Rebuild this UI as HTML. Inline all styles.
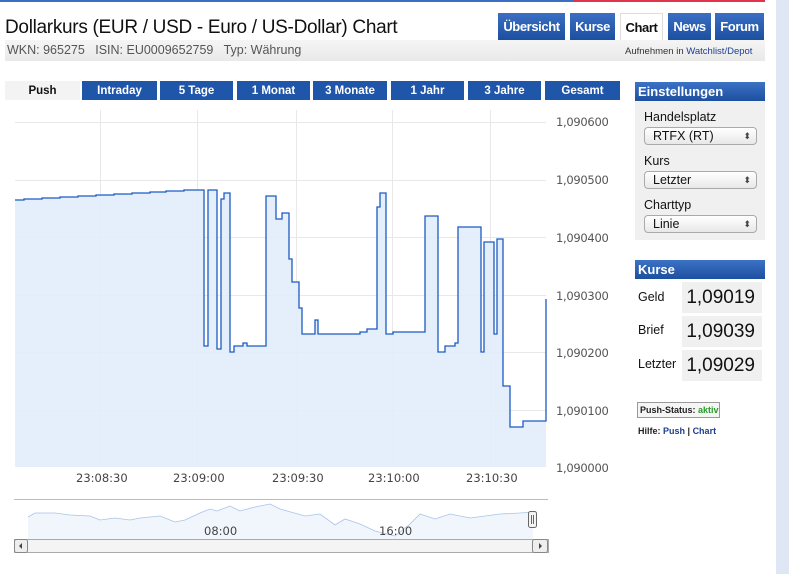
<!DOCTYPE html>
<html><head><meta charset="utf-8"><style>
*{margin:0;padding:0;box-sizing:border-box}
body{width:789px;height:574px;background:#fff;font-family:"Liberation Sans",Arial,sans-serif;position:relative;overflow:hidden}
.a{position:absolute}
.tab{position:absolute;top:13px;height:27px;background:linear-gradient(#3a6fc4,#1d4f9f);color:#fff;font-weight:bold;font-size:13px;text-align:center;line-height:28px;letter-spacing:-0.4px}
.per{position:absolute;top:81px;height:19px;background:#1f56a9;color:#fff;font-weight:bold;font-size:11.5px;text-align:center;line-height:21px}
.hd{position:absolute;left:635px;width:130px;height:19px;background:linear-gradient(#3c72c6,#1d4f9f);color:#fff;font-weight:bold;font-size:13px;line-height:20px;padding-left:3px}
.lbl{position:absolute;left:644px;font-size:12.5px;color:#111}
.sel{position:absolute;left:644px;width:113px;height:18px;border:1px solid #aaa;border-radius:4px;background:linear-gradient(#fff,#e8e8e8);font-size:12.5px;line-height:16px;padding-left:8px;color:#111}
.sel:after{content:"⬍";position:absolute;right:5px;top:0;font-size:9px;color:#444}
.y{position:absolute;left:556px;font-size:11.5px;color:#555;font-family:"DejaVu Sans",sans-serif;letter-spacing:-0.3px}
.t{position:absolute;top:471px;font-size:11.5px;color:#444;font-family:"DejaVu Sans",sans-serif}
.kl{position:absolute;left:638px;font-size:12.5px;color:#111}
.kv{position:absolute;left:682px;width:80px;height:31px;background:#f0f0f0;font-size:19px;text-align:right;padding-right:7px;line-height:31px;color:#111}
</style></head><body>
<div class="a" style="left:0;top:0;width:573px;height:2px;background:#3a6fc4"></div>
<div class="a" style="left:573px;top:0;width:192px;height:2px;background:#e0334c"></div>
<div class="a" style="left:776px;top:0;width:13px;height:574px;background:#dfe7f5"></div>
<div class="a" style="left:5px;top:17px;font-size:19px;color:#111;letter-spacing:-0.3px">Dollarkurs (EUR / USD - Euro / US-Dollar) Chart</div>
<div class="tab" style="left:498px;width:67px">Übersicht</div>
<div class="tab" style="left:570px;width:45px">Kurse</div>
<div class="tab" style="left:620px;width:43px;background:#fff;color:#111;border:1px solid #ddd;border-bottom:none">Chart</div>
<div class="tab" style="left:668px;width:43px">News</div>
<div class="tab" style="left:715px;width:49px">Forum</div>
<div class="a" style="left:5px;top:40px;width:760px;height:21px;background:linear-gradient(#f5f5f5,#e9e9e9)"></div>
<div class="a" style="left:7px;top:43px;font-size:12.5px;color:#555">WKN: 965275 &nbsp; ISIN: EU0009652759 &nbsp; Typ: Währung</div>
<div class="a" style="left:625px;top:46px;font-size:9.5px;color:#333">Aufnehmen in <span style="color:#1d3f8f">Watchlist/Depot</span></div>
<div class="per" style="left:5px;width:75px;background:#f3f3f3;color:#111">Push</div>
<div class="per" style="left:82px;width:75px">Intraday</div>
<div class="per" style="left:160px;width:73px">5 Tage</div>
<div class="per" style="left:237px;width:73px">1 Monat</div>
<div class="per" style="left:313px;width:74px">3 Monate</div>
<div class="per" style="left:391px;width:73px">1 Jahr</div>
<div class="per" style="left:468px;width:73px">3 Jahre</div>
<div class="per" style="left:545px;width:75px">Gesamt</div>

<svg class="a" style="left:0;top:0" width="560" height="574">
<g stroke="#e8e8e8" stroke-width="1">
<line x1="15" y1="122.5" x2="546" y2="122.5"/><line x1="15" y1="180.5" x2="546" y2="180.5"/><line x1="15" y1="237.5" x2="546" y2="237.5"/><line x1="15" y1="295.5" x2="546" y2="295.5"/><line x1="15" y1="352.5" x2="546" y2="352.5"/><line x1="15" y1="410.5" x2="546" y2="410.5"/>
<line x1="100.5" y1="110" x2="100.5" y2="467"/><line x1="197.5" y1="110" x2="197.5" y2="467"/><line x1="296.5" y1="110" x2="296.5" y2="467"/><line x1="392.5" y1="110" x2="392.5" y2="467"/><line x1="490.5" y1="110" x2="490.5" y2="467"/>
</g>
<defs><path id="ln" d="M15 200 L24 200 L24 199 L42 199 L42 198 L60 198 L60 197 L78 197 L78 196 L96 196 L96 195 L114 195 L114 194 L132 194 L132 193 L150 193 L150 192 L166 192 L166 191 L184 191 L184 190 L204 190 L204 346 L208 346 L208 190 L217 190 L217 349 L221 349 L221 199 L224 199 L224 193 L230 193 L230 352 L234 352 L234 346 L243 346 L243 343 L247 343 L247 346 L266 346 L266 196 L276 196 L276 219 L282 219 L282 213 L289 213 L289 259 L292 259 L292 282 L299 282 L299 308 L302 308 L302 334 L315 334 L315 320 L318 320 L318 334 L360 334 L360 332 L367 332 L367 329 L377 329 L377 207 L380 207 L380 193 L386 193 L386 334 L393 334 L393 332 L425 332 L425 216 L438 216 L438 352 L445 352 L445 346 L455 346 L455 343 L458 343 L458 227 L481 227 L481 352 L484 352 L484 242 L494 242 L494 334 L497 334 L497 239 L503 239 L503 386 L510 386 L510 427 L523 427 L523 421 L546 421 L546 299"/></defs>
<path fill="#e1edfb" fill-opacity="0.9" d="M15 200 L24 200 L24 199 L42 199 L42 198 L60 198 L60 197 L78 197 L78 196 L96 196 L96 195 L114 195 L114 194 L132 194 L132 193 L150 193 L150 192 L166 192 L166 191 L184 191 L184 190 L204 190 L204 346 L208 346 L208 190 L217 190 L217 349 L221 349 L221 199 L224 199 L224 193 L230 193 L230 352 L234 352 L234 346 L243 346 L243 343 L247 343 L247 346 L266 346 L266 196 L276 196 L276 219 L282 219 L282 213 L289 213 L289 259 L292 259 L292 282 L299 282 L299 308 L302 308 L302 334 L315 334 L315 320 L318 320 L318 334 L360 334 L360 332 L367 332 L367 329 L377 329 L377 207 L380 207 L380 193 L386 193 L386 334 L393 334 L393 332 L425 332 L425 216 L438 216 L438 352 L445 352 L445 346 L455 346 L455 343 L458 343 L458 227 L481 227 L481 352 L484 352 L484 242 L494 242 L494 334 L497 334 L497 239 L503 239 L503 386 L510 386 L510 427 L523 427 L523 421 L546 421 L546 299 L546 467 L15 467 Z"/>
<use href="#ln" fill="none" stroke="#1c5bc4" stroke-width="1.3"/>
<line x1="14" y1="499.5" x2="548" y2="499.5" stroke="#bbb"/>
<path d="M28 517 L35 513 L55 513 L70 515 L90 516 L100 520 L115 518 L130 520 L140 518 L160 516 L175 522 L185 520 L200 513 L210 509 L217 511 L230 506 L240 511 L255 507 L270 504 L280 509 L305 516 L320 514 L335 525 L345 519 L360 524 L375 531 L395 536 L410 524 L420 514 L435 519 L450 514 L470 518 L500 514 L520 513 L533 512 L533 539 L28 539Z" fill="#f1f6fd"/>
<path d="M28 517 L35 513 L55 513 L70 515 L90 516 L100 520 L115 518 L130 520 L140 518 L160 516 L175 522 L185 520 L200 513 L210 509 L217 511 L230 506 L240 511 L255 507 L270 504 L280 509 L305 516 L320 514 L335 525 L345 519 L360 524 L375 531 L395 536 L410 524 L420 514 L435 519 L450 514 L470 518 L500 514 L520 513 L533 512" fill="none" stroke="#a9c3e8" stroke-width="0.8"/>
<rect x="14.5" y="539.5" width="534" height="13" fill="#f4f4f4" stroke="#aaa"/>
<rect x="14.5" y="539.5" width="13" height="13" rx="2" fill="#eee" stroke="#888"/>
<rect x="532.5" y="539.5" width="15" height="13" rx="2" fill="#eee" stroke="#888"/>
<path d="M22 543 L19 546 L22 549Z" fill="#444"/><path d="M539 543 L542 546 L539 549Z" fill="#444"/>
<rect x="528.5" y="511.5" width="8" height="16" rx="2" fill="#f4f4f4" stroke="#666"/>
<line x1="531.5" y1="515" x2="531.5" y2="524" stroke="#666"/><line x1="533.5" y1="515" x2="533.5" y2="524" stroke="#666"/>
</svg>
<div class="y" style="top:115px">1,090600</div>
<div class="y" style="top:173px">1,090500</div>
<div class="y" style="top:231px">1,090400</div>
<div class="y" style="top:289px">1,090300</div>
<div class="y" style="top:346px">1,090200</div>
<div class="y" style="top:404px">1,090100</div>
<div class="y" style="top:461px">1,090000</div>
<div class="t" style="left:76px">23:08:30</div>
<div class="t" style="left:173px">23:09:00</div>
<div class="t" style="left:272px">23:09:30</div>
<div class="t" style="left:368px">23:10:00</div>
<div class="t" style="left:466px">23:10:30</div>
<div class="a" style="left:204px;top:524px;font-size:11.5px;color:#444;font-family:'DejaVu Sans',sans-serif">08:00</div>
<div class="a" style="left:379px;top:524px;font-size:11.5px;color:#444;font-family:'DejaVu Sans',sans-serif">16:00</div>

<div class="hd" style="top:82px">Einstellungen</div>
<div class="a" style="left:635px;top:101px;width:130px;height:139px;background:#f0f0f0"></div>
<div class="lbl" style="top:110px">Handelsplatz</div>
<div class="sel" style="top:127px">RTFX (RT)</div>
<div class="lbl" style="top:154px">Kurs</div>
<div class="sel" style="top:171px">Letzter</div>
<div class="lbl" style="top:198px">Charttyp</div>
<div class="sel" style="top:215px">Linie</div>
<div class="hd" style="top:260px">Kurse</div>
<div class="kl" style="top:290px">Geld</div><div class="kv" style="top:282px">1,09019</div>
<div class="kl" style="top:323px">Brief</div><div class="kv" style="top:316px">1,09039</div>
<div class="kl" style="top:357px">Letzter</div><div class="kv" style="top:350px">1,09029</div>
<div class="a" style="left:637px;top:402px;width:83px;height:16px;border:1px solid #999;background:#f5f5f5;font-size:9px;font-weight:bold;line-height:14px;padding-left:2px;color:#222">Push-Status: <span style="color:#2a9a2a">aktiv</span></div>
<div class="a" style="left:638px;top:426px;font-size:9px;font-weight:bold;color:#222">Hilfe: <span style="color:#1d3f8f">Push</span> | <span style="color:#1d3f8f">Chart</span></div>
</body></html>
